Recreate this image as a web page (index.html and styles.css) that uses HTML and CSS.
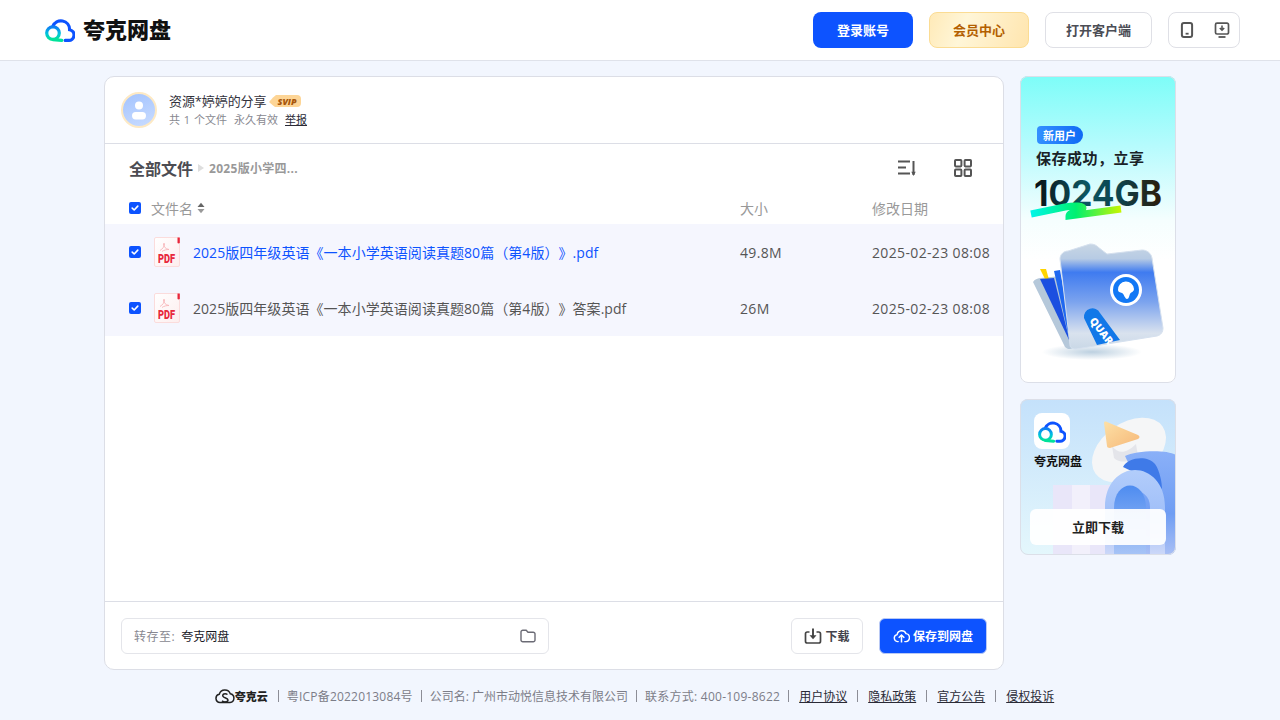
FILE: index.html
```html
<!DOCTYPE html>
<html lang="zh-CN">
<head>
<meta charset="utf-8">
<title>夸克网盘分享</title>
<link rel="stylesheet" href="styles.css">
</head>
<body>
<svg class="defs" width="0" height="0" aria-hidden="true">
  <defs>
    <linearGradient id="ringGrad" x1="0" y1="0" x2="0" y2="1">
      <stop offset="0" stop-color="#0f7cf5"/><stop offset=".55" stop-color="#00c4dc"/><stop offset="1" stop-color="#00e29a"/>
    </linearGradient>
    <symbol id="cloud" viewBox="0 0 30 24">
      <path d="M20.200 22.400h3.100a5.400 5.400 0 0 0 1.300-10.700A8.700 8.700 0 0 0 7.800 8.400" fill="none" stroke="#0d53ff" stroke-width="3.200" stroke-linecap="round"/>
      <circle cx="8" cy="15.100" r="6.300" fill="none" stroke="url(#ringGrad)" stroke-width="3.200"/>
      <path d="M8 21.600 16.800 22.400" fill="none" stroke="#00e29a" stroke-width="3.200" stroke-linecap="round"/>
    </symbol>
    <symbol id="check" viewBox="0 0 12 12">
      <rect width="12" height="12" rx="2" fill="#0d53ff"/>
      <path d="M3.200 6.100 5.200 8l3.600-3.900" fill="none" stroke="#fff" stroke-width="1.600" stroke-linecap="round" stroke-linejoin="round"/>
    </symbol>
    <linearGradient id="pdfBg" x1="0" y1="0" x2="1" y2="1">
      <stop offset="0" stop-color="#fff"/><stop offset="1" stop-color="#fdeeee"/>
    </linearGradient>
    <symbol id="pdf" viewBox="0 0 26 30">
      <path d="M2 .5h22a1.500 1.500 0 0 1 1.500 1.500v26a1.500 1.500 0 0 1-1.500 1.500H2A1.500 1.500 0 0 1 .5 28V2A1.500 1.500 0 0 1 2 .5Z" fill="url(#pdfBg)" stroke="#fbdcdc"/>
      <path d="M23.500 .5H25.800V6L24.500 6.500 23.500 6Z" fill="#e8263a"/>
      <path d="M6 13.500c2.500-1.500 4.500-4 4.500-6.500 0-1-1-1-1 0 0 2.500 2 5 5.500 5.500-2.500 0-5 .5-7 2" fill="none" stroke="#f7b4b8" stroke-width=".9"/>
    </symbol>
  </defs>
</svg>

<header class="topbar">
  <a class="brand">
    <svg class="brand-icon"><use href="#cloud"/></svg>
    <span class="brand-name">夸克网盘</span>
  </a>
  <nav class="top-actions">
    <button class="btn btn-login">登录账号</button>
    <button class="btn btn-vip">会员中心</button>
    <button class="btn btn-open">打开客户端</button>
    <div class="device-group">
      <svg class="device-icon" viewBox="0 0 18 18"><rect x="3.900" y="1.900" width="10.200" height="14.200" rx="2" fill="none" stroke="#555" stroke-width="2"/><rect x="7.600" y="11.800" width="3" height="1.800" fill="#555"/></svg>
      <svg class="device-icon" viewBox="0 0 18 18"><path d="M4 2.200h10a1.500 1.500 0 0 1 1.500 1.500v7.800a1.500 1.500 0 0 1-1.500 1.500H4a1.500 1.500 0 0 1-1.500-1.500V3.700A1.500 1.500 0 0 1 4 2.200Z" fill="none" stroke="#555" stroke-width="1.700"/><path d="M9 4.500v4.200M6.800 7 9 9.200 11.200 7" fill="none" stroke="#555" stroke-width="1.600"/><path d="M5.500 16h7" stroke="#555" stroke-width="1.800"/></svg>
    </div>
  </nav>
</header>

<main class="page">
  <section class="share-card">
    <div class="sharer">
      <div class="avatar">
        <svg viewBox="0 0 32 32" width="32" height="32"><circle cx="16" cy="11.500" r="4" fill="#fff"/><rect x="9" y="18" width="14" height="7.500" rx="3.700" fill="#fff"/></svg>
      </div>
      <div class="sharer-info">
        <div class="sharer-name">
          <span>资源*婷婷的分享</span>
          <svg class="svip" viewBox="0 0 32 14" width="32" height="14">
            <path d="M0 8 4 3.500 7 1h21a4 4 0 0 1 4 4v4a4 4 0 0 1-4 4H6L4 11.500Z" fill="#fdd596"/>
            <text x="18" y="10.500" class="svip-text">SVIP</text>
          </svg>
        </div>
        <div class="sharer-meta">
          <span>共 1 个文件</span><span>永久有效</span><a class="report">举报</a>
        </div>
      </div>
    </div>

    <div class="crumbs">
      <div class="crumb-path">
        <span class="crumb-root">全部文件</span>
        <span class="crumb-arrow"></span>
        <span class="crumb-cur">2025版小学四...</span>
      </div>
      <div class="crumb-tools">
        <svg class="tool" viewBox="0 0 20 20"><path d="M1 3.500h12M1 9.500h8M1 15.500h12" stroke="#555" stroke-width="2.200" fill="none"/><path d="M16.500 3v14" stroke="#555" stroke-width="2" fill="none"/><path d="M14.300 13.800h4.400L16.500 18Z" fill="#555"/></svg>
        <svg class="tool" viewBox="0 0 20 20"><g fill="none" stroke="#555" stroke-width="2"><rect x="2" y="2" width="6.400" height="6.400" rx=".8"/><rect x="11.600" y="2" width="6.400" height="6.400" rx=".8"/><rect x="2" y="11.600" width="6.400" height="6.400" rx=".8"/><rect x="11.600" y="11.600" width="6.400" height="6.400" rx=".8"/></g></svg>
      </div>
    </div>

    <div class="file-table">
      <div class="row row-head">
        <svg class="chk"><use href="#check"/></svg>
        <div class="col-name head-name">文件名
          <svg class="sort" viewBox="0 0 8 12" width="8" height="12"><path d="M4 .8 7.500 5H.5Z" fill="#666"/><path d="M4 11.200 .5 7h7Z" fill="#999"/></svg>
        </div>
        <div class="col-size">大小</div>
        <div class="col-date">修改日期</div>
      </div>
      <div class="row row-file">
        <svg class="chk"><use href="#check"/></svg>
        <div class="file-icon"><svg class="pdf-svg"><use href="#pdf"/></svg><span class="pdf-label">PDF</span></div>
        <div class="col-name file-name file-link">2025版四年级英语《一本小学英语阅读真题80篇（第4版）》.pdf</div>
        <div class="col-size">49.8M</div>
        <div class="col-date">2025-02-23 08:08</div>
      </div>
      <div class="row row-file">
        <svg class="chk"><use href="#check"/></svg>
        <div class="file-icon"><svg class="pdf-svg"><use href="#pdf"/></svg><span class="pdf-label">PDF</span></div>
        <div class="col-name file-name">2025版四年级英语《一本小学英语阅读真题80篇（第4版）》答案.pdf</div>
        <div class="col-size">26M</div>
        <div class="col-date">2025-02-23 08:08</div>
      </div>
    </div>

    <div class="save-bar">
      <div class="save-path">
        <span class="save-label">转存至:</span>
        <span class="save-target">夸克网盘</span>
        <svg class="save-folder" viewBox="0 0 16 14" width="16" height="14"><path d="M1 3a1.800 1.800 0 0 1 1.800-1.800h3.400L8 3.200h5.200A1.800 1.800 0 0 1 15 5v6a1.800 1.800 0 0 1-1.800 1.800H2.800A1.800 1.800 0 0 1 1 11Z" fill="none" stroke="#6b6b75" stroke-width="1.400"/></svg>
      </div>
      <button class="act act-download">
        <svg viewBox="0 0 18 18" width="18" height="18"><path d="M5.500 5H3.300A1.800 1.800 0 0 0 1.500 6.800v7.400A1.800 1.800 0 0 0 3.300 16h11.400a1.800 1.800 0 0 0 1.800-1.800V6.800A1.800 1.800 0 0 0 14.700 5h-2.200" fill="none" stroke="#444" stroke-width="1.700"/><path d="M9 1.500v9" stroke="#444" stroke-width="1.900"/><path d="M5.500 8.200 9 12.300l3.500-4.100Z" fill="#444"/></svg>
        下载
      </button>
      <button class="act act-save">
        <svg viewBox="0 0 18 16" width="17" height="15"><path d="M5.500 14.500H4.800A3.800 3.800 0 0 1 4.300 7 5 5 0 0 1 13.800 6a4.300 4.300 0 0 1 0 8.500h-1.300" fill="none" stroke="#fff" stroke-width="1.500" stroke-linecap="round"/><path d="M9 15.500V8M6 10.500 9 7.500l3 3" fill="none" stroke="#fff" stroke-width="1.600"/></svg>
        保存到网盘
      </button>
    </div>
  </section>

  <aside class="side">
    <svg class="ad ad-tall" viewBox="0 0 156 307" width="156" height="307">
      <defs>
        <linearGradient id="adBg" x1="0" y1="0" x2="0" y2="1"><stop offset="0" stop-color="#7dfdf8"/><stop offset=".22" stop-color="#b4fbfd"/><stop offset=".47" stop-color="#f5fefe"/><stop offset=".6" stop-color="#fff"/></linearGradient>
        <linearGradient id="adBadge" x1="0" y1="0" x2="1" y2="0"><stop offset="0" stop-color="#3390ff"/><stop offset="1" stop-color="#0f6af5"/></linearGradient>
        <linearGradient id="adNum" x1="0" y1="0" x2="1" y2="0"><stop offset="0" stop-color="#0a0f14"/><stop offset=".4" stop-color="#0b5560"/><stop offset=".65" stop-color="#0b4550"/><stop offset="1" stop-color="#2b1b08"/></linearGradient>
        <linearGradient id="adStroke" x1="0" y1="0" x2="1" y2="0"><stop offset="0" stop-color="#00f5e8"/><stop offset=".5" stop-color="#00f070"/><stop offset="1" stop-color="#c8f500"/></linearGradient>
        <linearGradient id="folder" x1="0" y1="0" x2="0" y2="1"><stop offset="0" stop-color="#c8d6e4"/><stop offset=".14" stop-color="#b7cbe4"/><stop offset=".27" stop-color="#3f7bf0"/><stop offset=".55" stop-color="#7ba3ee"/><stop offset=".85" stop-color="#d9e2ee"/><stop offset="1" stop-color="#c9d8e6"/></linearGradient>
        <radialGradient id="shade"><stop offset="0" stop-color="#bcd0e0"/><stop offset="1" stop-color="#fff"/></radialGradient>
      </defs>
      <rect width="156" height="307" fill="url(#adBg)"/>
      <path d="M21 50h33a9 9 0 0 1 0 18H21a4 4 0 0 1-4-4V54a4 4 0 0 1 4-4Z" fill="url(#adBadge)"/>
      <text x="23" y="63.500" class="ad-badge">新用户</text>
      <text x="16" y="88" class="ad-title">保存成功，立享</text>
      <text x="14" y="130" class="ad-num" textLength="128" lengthAdjust="spacingAndGlyphs">1024GB</text>
      <path d="M11 138 45 131c10-2 18-1 18 1 0 2-14 4-14 8l52-7" fill="none" stroke="url(#adStroke)" stroke-width="7"/>
      <ellipse cx="72" cy="276" rx="50" ry="8" fill="url(#shade)"/>
      <path d="M13 206c2-3 5-4 8-4l20-2 12 72c-3 2-6 1-8-1Z" fill="#b5c8da"/>
      <path d="M20 193h6l4 14h-3Z" fill="#ffd400"/>
      <path d="M20 203l14-1 16 64Z" fill="#1b4fe0"/>
      <path d="M34 195l6-1 13 74-3-2Z" fill="#2068f0"/>
      <path d="M40 183c0-5 4-8 8-8l22-7c4 0 6 1 8 3l9 7 35-4c5 0 9 3 10 8l11 70c0 4-2 7-6 8l-81 13c-3 0-6-1-6-4Z" fill="url(#folder)" stroke="#d5e0ee"/>
      <circle cx="106" cy="214" r="16" fill="#fff"/>
      <circle cx="106" cy="214" r="13" fill="#1278f5"/>
      <path d="M98 214a8 8 0 0 1 16-1c0 3-3 3-4 5s-1 5-3 5-3-5-5-6-4-1-4-3Z" fill="#fff"/>
      <path d="M64 242a8.500 8.500 0 0 1 16-5l20 27-23 5Z" fill="#1278e8"/>
      <text transform="translate(69 245) rotate(52)" class="ad-tag">QUAR</text>
    </svg>

    <svg class="ad ad-short" viewBox="0 0 156 156" width="156" height="156">
      <defs>
        <linearGradient id="ad2Bg" x1="0" y1="0" x2="0" y2="1"><stop offset="0" stop-color="#c4e1fb"/><stop offset="1" stop-color="#e4f7fc"/></linearGradient>
        <linearGradient id="tri" x1="0" y1="0" x2="1" y2="1"><stop offset="0" stop-color="#fde0a6"/><stop offset="1" stop-color="#f6b878"/></linearGradient>
        <linearGradient id="backBody" x1="0" y1="0" x2="0" y2="1"><stop offset="0" stop-color="#8ab0f8"/><stop offset=".6" stop-color="#6f9df3"/><stop offset="1" stop-color="#a9bff5"/></linearGradient>
        <linearGradient id="frontRing" x1="0" y1="0" x2="0" y2="1"><stop offset="0" stop-color="#b2cdfb"/><stop offset=".6" stop-color="#9ebdf8"/><stop offset="1" stop-color="#cdd8f8"/></linearGradient>
        <linearGradient id="ringHole" x1="0" y1="0" x2="0" y2="1"><stop offset="0" stop-color="#4e8cf0"/><stop offset="1" stop-color="#a8c4f6"/></linearGradient>
      </defs>
      <rect width="156" height="156" fill="url(#ad2Bg)"/>
      <rect x="33" y="86" width="62" height="70" fill="#e9e6f9"/>
      <rect x="52" y="86" width="18" height="70" fill="#f2f0fb"/>
      <ellipse cx="109" cy="51" rx="41" ry="27" transform="rotate(-35 109 51)" fill="#f5f6f7"/>
      <path d="M92 47c6 8 14 8 24-2l2 12c-6 6-18 8-24 2Z" fill="#e4e5ea"/>
      <path d="M84 24c0-1 1-2 3-1l31 13c2 1 2 3 0 4l-28 9c-2 0-3-1-3-2Z" fill="url(#tri)"/>
      <path d="M105 57c10-5 40-7 51-1v100h-40V80Z" fill="url(#backBody)"/>
      <path d="M103 68c5-10 25-12 32-3 5 7 7 19 7 25-12-10-27-16-39-22Z" fill="#3f7ae8"/>
      <path d="M85 156v-48c0-24 15-37 30-37s30 13 30 37v48h-15v-48c0-22-32-22-32 0v48Z" fill="url(#frontRing)"/>
      <path d="M94 156v-47c0-30 32-30 32 0v47Z" fill="url(#ringHole)"/>
      <rect x="14" y="14" width="36" height="36" rx="8" fill="#fff"/>
      <use href="#cloud" x="18" y="21" width="28" height="23"/>
      <text x="14" y="67" class="ad2-brand">夸克网盘</text>
      <rect x="10" y="110" width="136" height="36" rx="6" fill="#fff" fill-opacity=".93"/>
      <text x="78" y="132.500" class="ad2-btn">立即下载</text>
    </svg>
  </aside>
</main>

<footer class="foot">
  <span class="foot-logo">
    <svg viewBox="0 0 20 16" width="20" height="16"><path d="M5 14.500A4.200 4.200 0 0 1 4.300 6.200 5.800 5.800 0 0 1 15.300 5.800 4.400 4.400 0 0 1 15 14.500Z" fill="none" stroke="#222" stroke-width="1.500"/><path d="M12.500 6.500C10 4.800 6.800 6.300 8 8.300s5 1.500 5 3.800c0 2-3.800 2.400-6 .7" fill="none" stroke="#222" stroke-width="1.500"/></svg>
    <span>夸克云</span>
  </span>
  <i class="sep"></i><span class="foot-icp">粤ICP备2022013084号</span>
  <i class="sep"></i><span>公司名: 广州市动悦信息技术有限公司</span>
  <i class="sep"></i><span class="foot-tel">联系方式: 400-109-8622</span>
  <i class="sep"></i><a>用户协议</a>
  <i class="sep"></i><a>隐私政策</a>
  <i class="sep"></i><a>官方公告</a>
  <i class="sep"></i><a>侵权投诉</a>
</footer>
</body>
</html>
```

FILE: styles.css
```css
* { box-sizing: border-box; }
html, body { margin: 0; height: 100%; }
body {
  height: 720px;
  overflow: hidden;
  display: flex;
  flex-direction: column;
  background: #f2f6fe;
  color: #333;
  font-family: "Open Sans", "Noto Sans CJK SC", sans-serif;
  font-size: 14px;
  text-spacing-trim: space-all;
}
.defs { position: absolute; }
button { font-family: inherit; cursor: pointer; }

.topbar {
  flex: none;
  height: 61px;
  padding: 0 40px 0 45px;
  background: #fff;
  border-bottom: 1px solid #dfe2ea;
  display: flex;
  align-items: center;
  justify-content: space-between;
}
.brand { display: flex; align-items: center; gap: 8px; }
.brand-icon { width: 30px; height: 24px; }
.brand-name { font-size: 22px; line-height: 30px; font-weight: 900; color: #111; margin-top: -2px; }
.top-actions { display: flex; gap: 16px; align-items: center; }
.btn {
  height: 36px;
  width: 100px;
  border-radius: 8px;
  border: 1px solid transparent;
  font-size: 13px;
  font-weight: 700;
  padding: 0 0 2px;
}
.btn-login { background: #0d53ff; color: #fff; }
.btn-vip {
  background: linear-gradient(110deg, #ffeab8 0%, #fff6d8 35%, #ffe5ae 100%);
  border-color: #fbdc93;
  color: #b35f00;
}
.btn-open { width: 107px; background: #fff; border-color: #dfe0e6; color: #4b4d55; }
.device-group {
  width: 72px;
  height: 36px;
  border: 1px solid #dfe0e6;
  border-radius: 8px;
  display: flex;
  align-items: center;
  justify-content: space-between;
  padding: 0 8px 0 9px;
}
.device-icon { width: 18px; height: 18px; }

.page {
  flex: none;
  height: 610px;
  padding-top: 15px;
  display: flex;
  justify-content: center;
  gap: 16px;
}
.share-card {
  width: 900px;
  height: 594px;
  background: #fff;
  border: 1px solid #dcdee6;
  border-radius: 10px;
  display: flex;
  flex-direction: column;
}
.sharer {
  flex: none;
  height: 67px;
  padding: 0 16px;
  display: flex;
  align-items: center;
  gap: 12px;
  border-bottom: 1px solid #dcdee6;
}
.avatar {
  width: 36px;
  height: 36px;
  border-radius: 50%;
  border: 2px solid #fde9c4;
  background: linear-gradient(160deg, #a3c3fe, #c9dcff);
}
.avatar svg { display: block; }
.sharer-info { margin-top: -1px; }
.sharer-name { display: flex; align-items: center; gap: 3px; font-size: 13px; line-height: 18px; color: #32323c; letter-spacing: -.1px; }
.svip { display: block; }
.svip-text { font: italic 800 9px "Open Sans", sans-serif; fill: #a8560a; text-anchor: middle; }
.sharer-meta { display: flex; gap: 7px; margin-top: 3px; font-size: 11px; line-height: 14px; color: #888890; word-spacing: 1px; }
.report { color: #2a2a36; text-decoration: underline; }

.crumbs {
  flex: none;
  height: 46px;
  padding: 0 30px 0 24px;
  display: flex;
  align-items: center;
  justify-content: space-between;
}
.crumb-path { display: flex; align-items: center; margin-top: 2px; }
.crumb-root { font-size: 16px; font-weight: 700; color: #4c4c52; }
.crumb-arrow {
  width: 0;
  height: 0;
  margin: 0 5px 0 5px;
  border-left: 6px solid #dedede;
  border-top: 4px solid transparent;
  border-bottom: 4px solid transparent;
}
.crumb-cur { font-size: 12px; font-weight: 700; color: #999; letter-spacing: .3px; }
.crumb-tools { display: flex; gap: 36px; margin-top: 2px; }
.tool { width: 20px; height: 20px; display: block; }

.file-table { flex: 1; }
.row { display: flex; align-items: center; padding-left: 24px; }
.row-head { height: 34px; padding-top: 2px; color: #999; }
.row-file { height: 56px; background: #f5f6fe; }
.chk { width: 12px; height: 12px; flex: none; }
.col-name { flex: 1; min-width: 0; }
.head-name { margin-left: 10px; display: flex; align-items: center; gap: 4px; }
.col-size { width: 132px; flex: none; }
.col-date { width: 131px; flex: none; white-space: nowrap; }
.row-file .col-size, .row-file .col-date { color: #555; letter-spacing: .35px; }
.file-icon { position: relative; width: 26px; height: 30px; margin-left: 13px; flex: none; }
.pdf-svg { width: 26px; height: 30px; display: block; }
.pdf-label {
  position: absolute;
  left: 4px;
  bottom: 1px;
  font: 900 12.500px/14px "Roboto", sans-serif;
  color: #e8283c;
  transform: scaleX(.74);
  transform-origin: left center;
}
.file-name { margin-left: 13px; color: #555; white-space: nowrap; letter-spacing: .05px; }
.file-link { color: #0d53ff; }

.save-bar {
  flex: none;
  height: 68px;
  padding: 0 16px;
  border-top: 1px solid #dcdee6;
  display: flex;
  align-items: center;
}
.save-path {
  width: 428px;
  height: 36px;
  padding: 0 12px;
  border: 1px solid #e4e5ea;
  border-radius: 6px;
  display: flex;
  align-items: center;
  font-size: 12px;
}
.save-label { color: #888890; margin-right: 6px; letter-spacing: .5px; }
.save-target { color: #18181f; flex: 1; }
.save-folder { display: block; }
.act {
  height: 36px;
  padding: 0;
  border-radius: 6px;
  display: flex;
  align-items: center;
  justify-content: center;
  gap: 3px;
  font-size: 12px;
  font-weight: 700;
}
.act-download { width: 72px; margin-left: auto; background: #fff; border: 1px solid #e4e5ea; color: #44444c; }
.act-save { width: 108px; margin-left: 16px; background: #0d53ff; border: 1px solid #b9c9f4; color: #fff; }

.side { display: flex; flex-direction: column; gap: 16px; width: 156px; }
.ad { display: block; border-radius: 8px; outline: 1px solid #dcdfe8; outline-offset: -1px; }
.ad-badge { font: 700 11px "Noto Sans CJK SC", sans-serif; fill: #fff; }
.ad-title { font: 700 15px "Noto Sans CJK SC", sans-serif; fill: #1a2226; letter-spacing: .5px; }
.ad-num { font: 700 35px "Inter", sans-serif; fill: url(#adNum); }
.ad-tag { font: 800 10.500px "Open Sans", sans-serif; fill: #fff; }
.ad2-brand { font: 700 12px "Noto Sans CJK SC", sans-serif; fill: #111; }
.ad2-btn { font: 700 13px "Noto Sans CJK SC", sans-serif; fill: #222; text-anchor: middle; }

.foot {
  flex: 1;
  display: flex;
  align-items: center;
  justify-content: center;
  gap: 8px;
  font-size: 12px;
  color: #7c7d88;
  padding-right: 9px;
}
.foot a { color: #2a2a36; text-decoration: underline; margin: 0 2px; }
.foot-icp { letter-spacing: .2px; }
.foot-tel { letter-spacing: .25px; }
.foot-logo { display: flex; align-items: center; margin-right: 2px; font-size: 11px; font-weight: 800; color: #222; }
.foot-logo svg { display: block; }
.sep { width: 1px; height: 12px; background: #8c8d96; }
```
